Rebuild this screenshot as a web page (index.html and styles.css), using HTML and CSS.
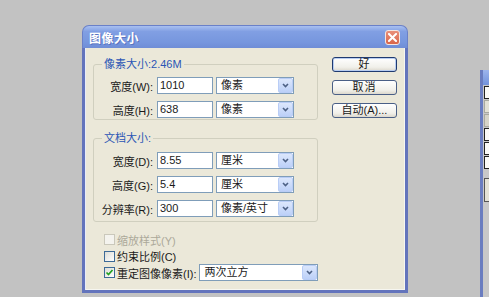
FILE: index.html
```html
<!DOCTYPE html>
<html>

<head>
    <title>图像大小</title>
    <link rel="stylesheet" href="styles.css">
</head>

<body>
    <div class="desktop">
        <div class="dialog">
            <div class="titlebar">
                <span class="title">图像大小</span>
                <span class="close">
                    <svg width="9" height="9" viewBox="0 0 9 9"><path d="M1 1 L8 8 M8 1 L1 8" stroke="#fff" stroke-width="2" stroke-linecap="square"/></svg>
                </span>
            </div>
            <div class="client">
                <div class="main">
                    <fieldset class="group group-pixels">
                        <legend>像素大小:2.46M</legend>
                        <div class="row">
                            <label>宽度(W):</label>
                            <div class="input">1010</div>
                            <div class="select">像素<span class="arrow"><svg width="7" height="5" viewBox="0 0 7 5"><path d="M1 1 L3.5 3.5 L6 1" fill="none" stroke="#4d6185" stroke-width="1.6"/></svg></span></div>
                        </div>
                        <div class="row">
                            <label>高度(H):</label>
                            <div class="input">638</div>
                            <div class="select">像素<span class="arrow"><svg width="7" height="5" viewBox="0 0 7 5"><path d="M1 1 L3.5 3.5 L6 1" fill="none" stroke="#4d6185" stroke-width="1.6"/></svg></span></div>
                        </div>
                    </fieldset>

                    <fieldset class="group group-doc">
                        <legend>文档大小:</legend>
                        <div class="row">
                            <label>宽度(D):</label>
                            <div class="input">8.55</div>
                            <div class="select">厘米<span class="arrow"><svg width="7" height="5" viewBox="0 0 7 5"><path d="M1 1 L3.5 3.5 L6 1" fill="none" stroke="#4d6185" stroke-width="1.6"/></svg></span></div>
                        </div>
                        <div class="row">
                            <label>高度(G):</label>
                            <div class="input">5.4</div>
                            <div class="select">厘米<span class="arrow"><svg width="7" height="5" viewBox="0 0 7 5"><path d="M1 1 L3.5 3.5 L6 1" fill="none" stroke="#4d6185" stroke-width="1.6"/></svg></span></div>
                        </div>
                        <div class="row">
                            <label>分辨率(R):</label>
                            <div class="input">300</div>
                            <div class="select">像素/英寸<span class="arrow"><svg width="7" height="5" viewBox="0 0 7 5"><path d="M1 1 L3.5 3.5 L6 1" fill="none" stroke="#4d6185" stroke-width="1.6"/></svg></span></div>
                        </div>
                    </fieldset>

                    <div class="checks">
                        <div class="check disabled"><span class="box"></span>缩放样式(Y)</div>
                        <div class="check"><span class="box"></span>约束比例(C)</div>
                        <div class="check check-last">
                            <span class="box checked"><svg width="9" height="9" viewBox="0 0 9 9"><path d="M1.5 4.5 L3.5 6.5 L7.5 2" fill="none" stroke="#21a121" stroke-width="1.7"/></svg></span>
                            重定图像像素(I):
                            <div class="select select-wide">两次立方<span class="arrow"><svg width="7" height="5" viewBox="0 0 7 5"><path d="M1 1 L3.5 3.5 L6 1" fill="none" stroke="#4d6185" stroke-width="1.6"/></svg></span></div>
                        </div>
                    </div>
                </div>

                <div class="buttons">
                    <div class="button default">好</div>
                    <div class="button">取消</div>
                    <div class="button button-auto">自动(A)...</div>
                </div>
            </div>
        </div>

        <!-- window behind, cut off by the right edge -->
        <div class="side-window">
            <div class="side-title"></div>
            <div class="side-item white"></div>
            <div class="side-item"></div>
            <div class="side-item dark"></div>
            <div class="side-item white"></div>
            <div class="side-item white"></div>
            <div class="side-item white"></div>
            <div class="side-item tall"></div>
        </div>
    </div>
</body>

</html>
```

FILE: styles.css
```css
body {
    margin: 0;
    padding: 0;
    background-color: #c2c2c2;
    font-family: "Liberation Sans", "Noto Sans CJK SC", sans-serif;
    font-size: 11px;
    color: #1a1a1a;
    overflow: hidden;
}

.desktop {
    position: relative;
    height: 297px;
    padding: 25px 0 0 82px;
    box-sizing: border-box;
}

/* Dialog */
.dialog {
    width: 326px;
    height: 268px;
    display: flex;
    flex-direction: column;
}

.titlebar {
    height: 23px;
    display: flex;
    align-items: center;
    padding: 0 7px 0 6px;
    border-radius: 7px 7px 0 0;
    background: linear-gradient(#a9c0f0, #819fe3 25%, #7696de 75%, #6f8dd6);
    border: 1px solid #6a80c8;
    border-bottom: none;
    box-sizing: border-box;
}

.title {
    color: #fff;
    font-size: 12px;
    font-weight: bold;
    letter-spacing: 0.5px;
    text-shadow: 1px 1px 0 #5a74c0;
}

.close {
    margin-left: auto;
    width: 15px;
    height: 15px;
    margin-top: 1px;
    box-sizing: border-box;
    border: 1px solid #f4e6e0;
    border-radius: 3px;
    background: linear-gradient(#e9907a, #d9654a);
    display: flex;
    align-items: center;
    justify-content: center;
}

.client {
    flex: 1;
    display: flex;
    background-color: #ebe8d9;
    border: 3px solid #6374bc;
    border-top: none;
    box-shadow: inset 1px 0 0 #e8ecf8, inset -1px -1px 0 #f6f6f0;
}

.main {
    padding: 9px 0 0 8px;
    width: 225px;
}

/* Group boxes */
.group {
    margin: 0;
    padding: 6px 0 1px 0;
    border: 1px solid #d0cfbf;
    border-radius: 3px;
    min-width: 0;
}

.group legend {
    margin-left: 8px;
    padding: 0 2px;
    line-height: 14px;
    color: #2a55b5;
}

.group-doc {
    margin-top: 11px;
    padding: 7px 0 4px 0;
}

.row {
    display: flex;
    align-items: center;
    height: 17px;
    margin-bottom: 7px;
}

.row:last-child {
    margin-bottom: 0;
}

.row label {
    width: 59px;
    margin-right: 4px;
    text-align: right;
    white-space: nowrap;
}

.input {
    width: 56px;
    height: 17px;
    box-sizing: border-box;
    border: 1px solid #7f9db9;
    background-color: #fff;
    padding-left: 2px;
    line-height: 15px;
}

.select {
    position: relative;
    width: 78px;
    height: 17px;
    margin-left: 3px;
    box-sizing: border-box;
    border: 1px solid #7f9db9;
    background-color: #fff;
    padding-left: 4px;
    line-height: 15px;
}

.select .arrow {
    position: absolute;
    top: 0;
    right: 0;
    width: 15px;
    height: 15px;
    box-sizing: border-box;
    border: 1px solid #b9cdf6;
    border-radius: 2px;
    background: linear-gradient(#dce7fc, #bcd0f8);
    display: flex;
    align-items: center;
    justify-content: center;
}

/* Checkboxes */
.checks {
    margin-top: 9px;
    padding-left: 11px;
}

.check {
    display: flex;
    align-items: center;
    height: 17px;
    white-space: nowrap;
}

.check:nth-child(2) {
    height: 16px;
}

.check.disabled {
    color: #aca899;
}

.box {
    width: 11px;
    height: 11px;
    margin-right: 2px;
    box-sizing: border-box;
    border: 1px solid #3c6a97;
    background: linear-gradient(135deg, #dcdcd6, #fff);
    display: flex;
    align-items: center;
    justify-content: center;
}

.disabled .box {
    border-color: #cac8bb;
    background: #f4f3ee;
}

.select-wide {
    width: 120px;
}

/* Buttons */
.buttons {
    padding: 9px 0 0 14px;
    width: 65px;
}

.button {
    height: 15px;
    box-sizing: border-box;
    border: 1px solid #4a5f86;
    border-radius: 3px;
    background: linear-gradient(#ffffff, #f1f0ea 70%, #dcd8cd);
    text-align: center;
    line-height: 13px;
    margin-bottom: 8px;
    letter-spacing: 1px;
}

.button.default {
    border-color: #1f3a70;
    box-shadow: inset 0 0 0 1px #b8cdf1;
}

.button-auto {
    margin-top: 4px;
    letter-spacing: 0;
}

/* Window behind the dialog */
.side-window {
    position: absolute;
    left: 480px;
    top: 70px;
    width: 20px;
    height: 230px;
    border-left: 3px solid #6a7dc0;
    background-color: #c8c8c8;
}

.side-title {
    height: 15px;
    background: linear-gradient(#9db5ec, #7293dc);
}

.side-item {
    height: 11px;
    margin: 1px 0 0 1px;
    border: 1px solid #a9a9a0;
    border-right: none;
    background-color: #e4e2d6;
}

.side-item.white {
    background-color: #fafaf7;
    border-color: #222;
}

.side-item.dark {
    background-color: #d6d4c8;
}

.side-item.tall {
    height: 22px;
    margin-top: 9px;
    border-color: #555;
}
```
